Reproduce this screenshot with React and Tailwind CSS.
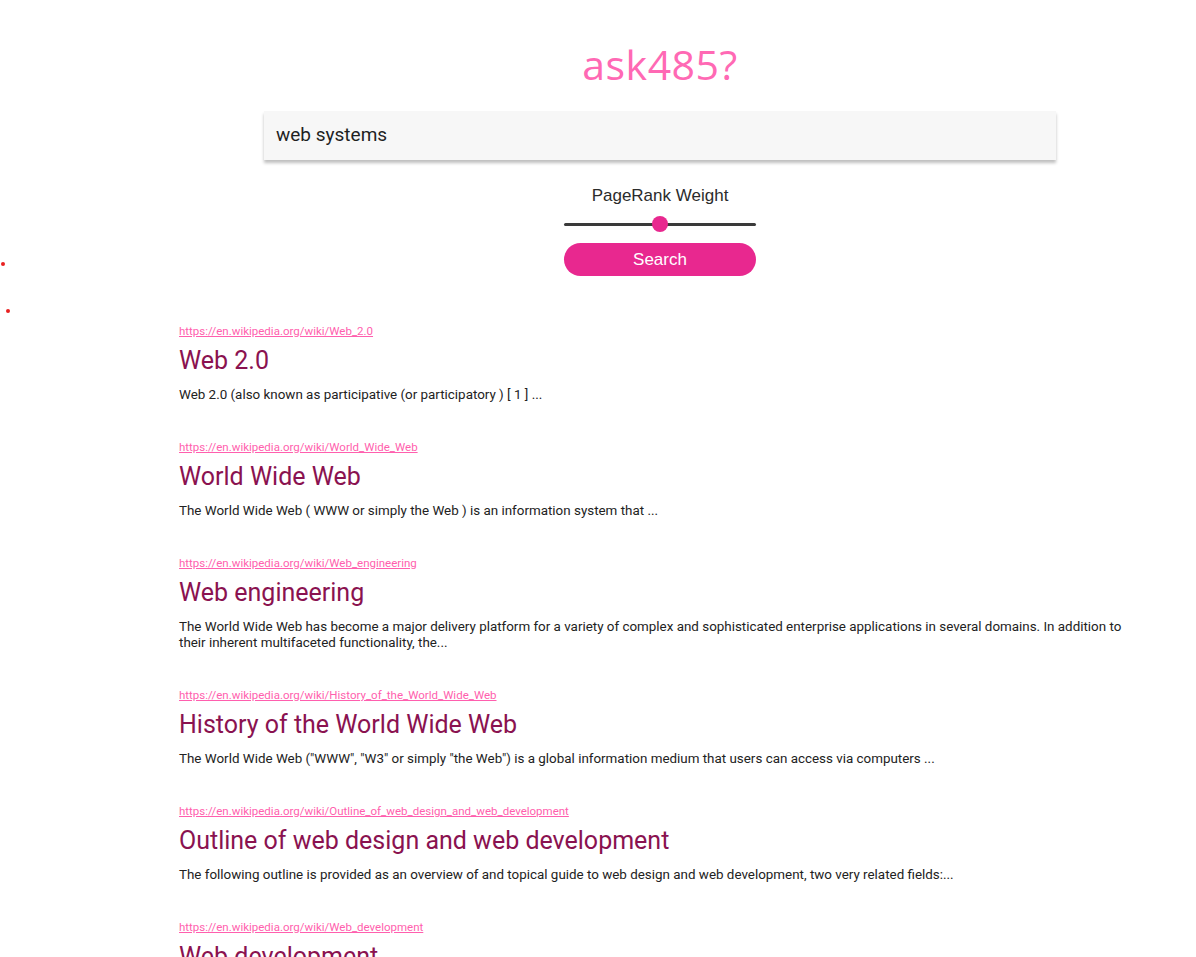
import React from 'react';

const results = [
  {
    url: 'https://en.wikipedia.org/wiki/Web_2.0',
    title: 'Web 2.0',
    summary: 'Web 2.0 (also known as participative (or participatory ) [ 1 ] ...',
  },
  {
    url: 'https://en.wikipedia.org/wiki/World_Wide_Web',
    title: 'World Wide Web',
    summary: 'The World Wide Web ( WWW or simply the Web ) is an information system that ...',
  },
  {
    url: 'https://en.wikipedia.org/wiki/Web_engineering',
    title: 'Web engineering',
    summary:
      'The World Wide Web has become a major delivery platform for a variety of complex and sophisticated enterprise applications in several domains. In addition to their inherent multifaceted functionality, the...',
  },
  {
    url: 'https://en.wikipedia.org/wiki/History_of_the_World_Wide_Web',
    title: 'History of the World Wide Web',
    summary:
      'The World Wide Web ("WWW", "W3" or simply "the Web") is a global information medium that users can access via computers ...',
  },
  {
    url: 'https://en.wikipedia.org/wiki/Outline_of_web_design_and_web_development',
    title: 'Outline of web design and web development',
    summary:
      'The following outline is provided as an overview of and topical guide to web design and web development, two very related fields:...',
  },
  {
    url: 'https://en.wikipedia.org/wiki/Web_development',
    title: 'Web development',
    summary: 'Web development is the work involved in developing a website for the Internet ...',
  },
];

const Result = ({ item }) => (
  <div className="pb-[36px]">
    <a
      href={item.url}
      className="block text-[11.5px] leading-[16px] text-[#ff5fae] underline"
    >
      {item.url}
    </a>
    <h2 className="mt-[6px] text-[25px] leading-[32px] text-[#8a1250]">{item.title}</h2>
    <p className="mt-[10px] text-[13.4px] leading-[16px] text-[#222]">{item.summary}</p>
  </div>
);

export default function App() {
  return (
    <div className="relative h-[957px] overflow-hidden bg-white font-['Roboto',sans-serif]">
      <span className="absolute left-[1px] top-[262px] h-[4px] w-[4px] rounded-full bg-[#e82020]" />
      <span className="absolute left-[6px] top-[309px] h-[4px] w-[4px] rounded-full bg-[#e82020]" />

      <div className="pl-[124px]">
        <div className="flex flex-col items-center">
          <h1 className="mt-[40px] font-['Open_Sans',sans-serif] text-[41px] leading-[48px] tracking-[0.5px] text-[#ff69b4]">
            ask485?
          </h1>
          <div className="mt-[23px] flex h-[49px] w-[792px] items-center bg-[#f7f7f7] px-[12px] shadow-[0_3px_3px_rgba(0,0,0,0.25)]">
            <span className="text-[19px] text-[#1f1f1f]">web systems</span>
          </div>
          <div className="mt-[26px] font-['Liberation_Sans',sans-serif] text-[17px] leading-[20px] text-[#2b2b2b]">
            PageRank Weight
          </div>
          <div className="relative mt-[9px] flex h-[18px] w-[192px] items-center">
            <div className="h-[3px] w-full rounded-full bg-[#3a3a3a]" />
            <span className="absolute left-[88px] top-[1px] h-[16px] w-[16px] rounded-full bg-[#e8288f]" />
          </div>
          <button className="mt-[10px] h-[33px] w-[192px] rounded-full bg-[#e8288f] font-['Liberation_Sans',sans-serif] text-[17px] text-white">
            Search
          </button>
        </div>
      </div>

      <div className="mt-[47px] pl-[179px] pr-[66px]">
        {results.map((item) => (
          <Result key={item.url} item={item} />
        ))}
      </div>
    </div>
  );
}
